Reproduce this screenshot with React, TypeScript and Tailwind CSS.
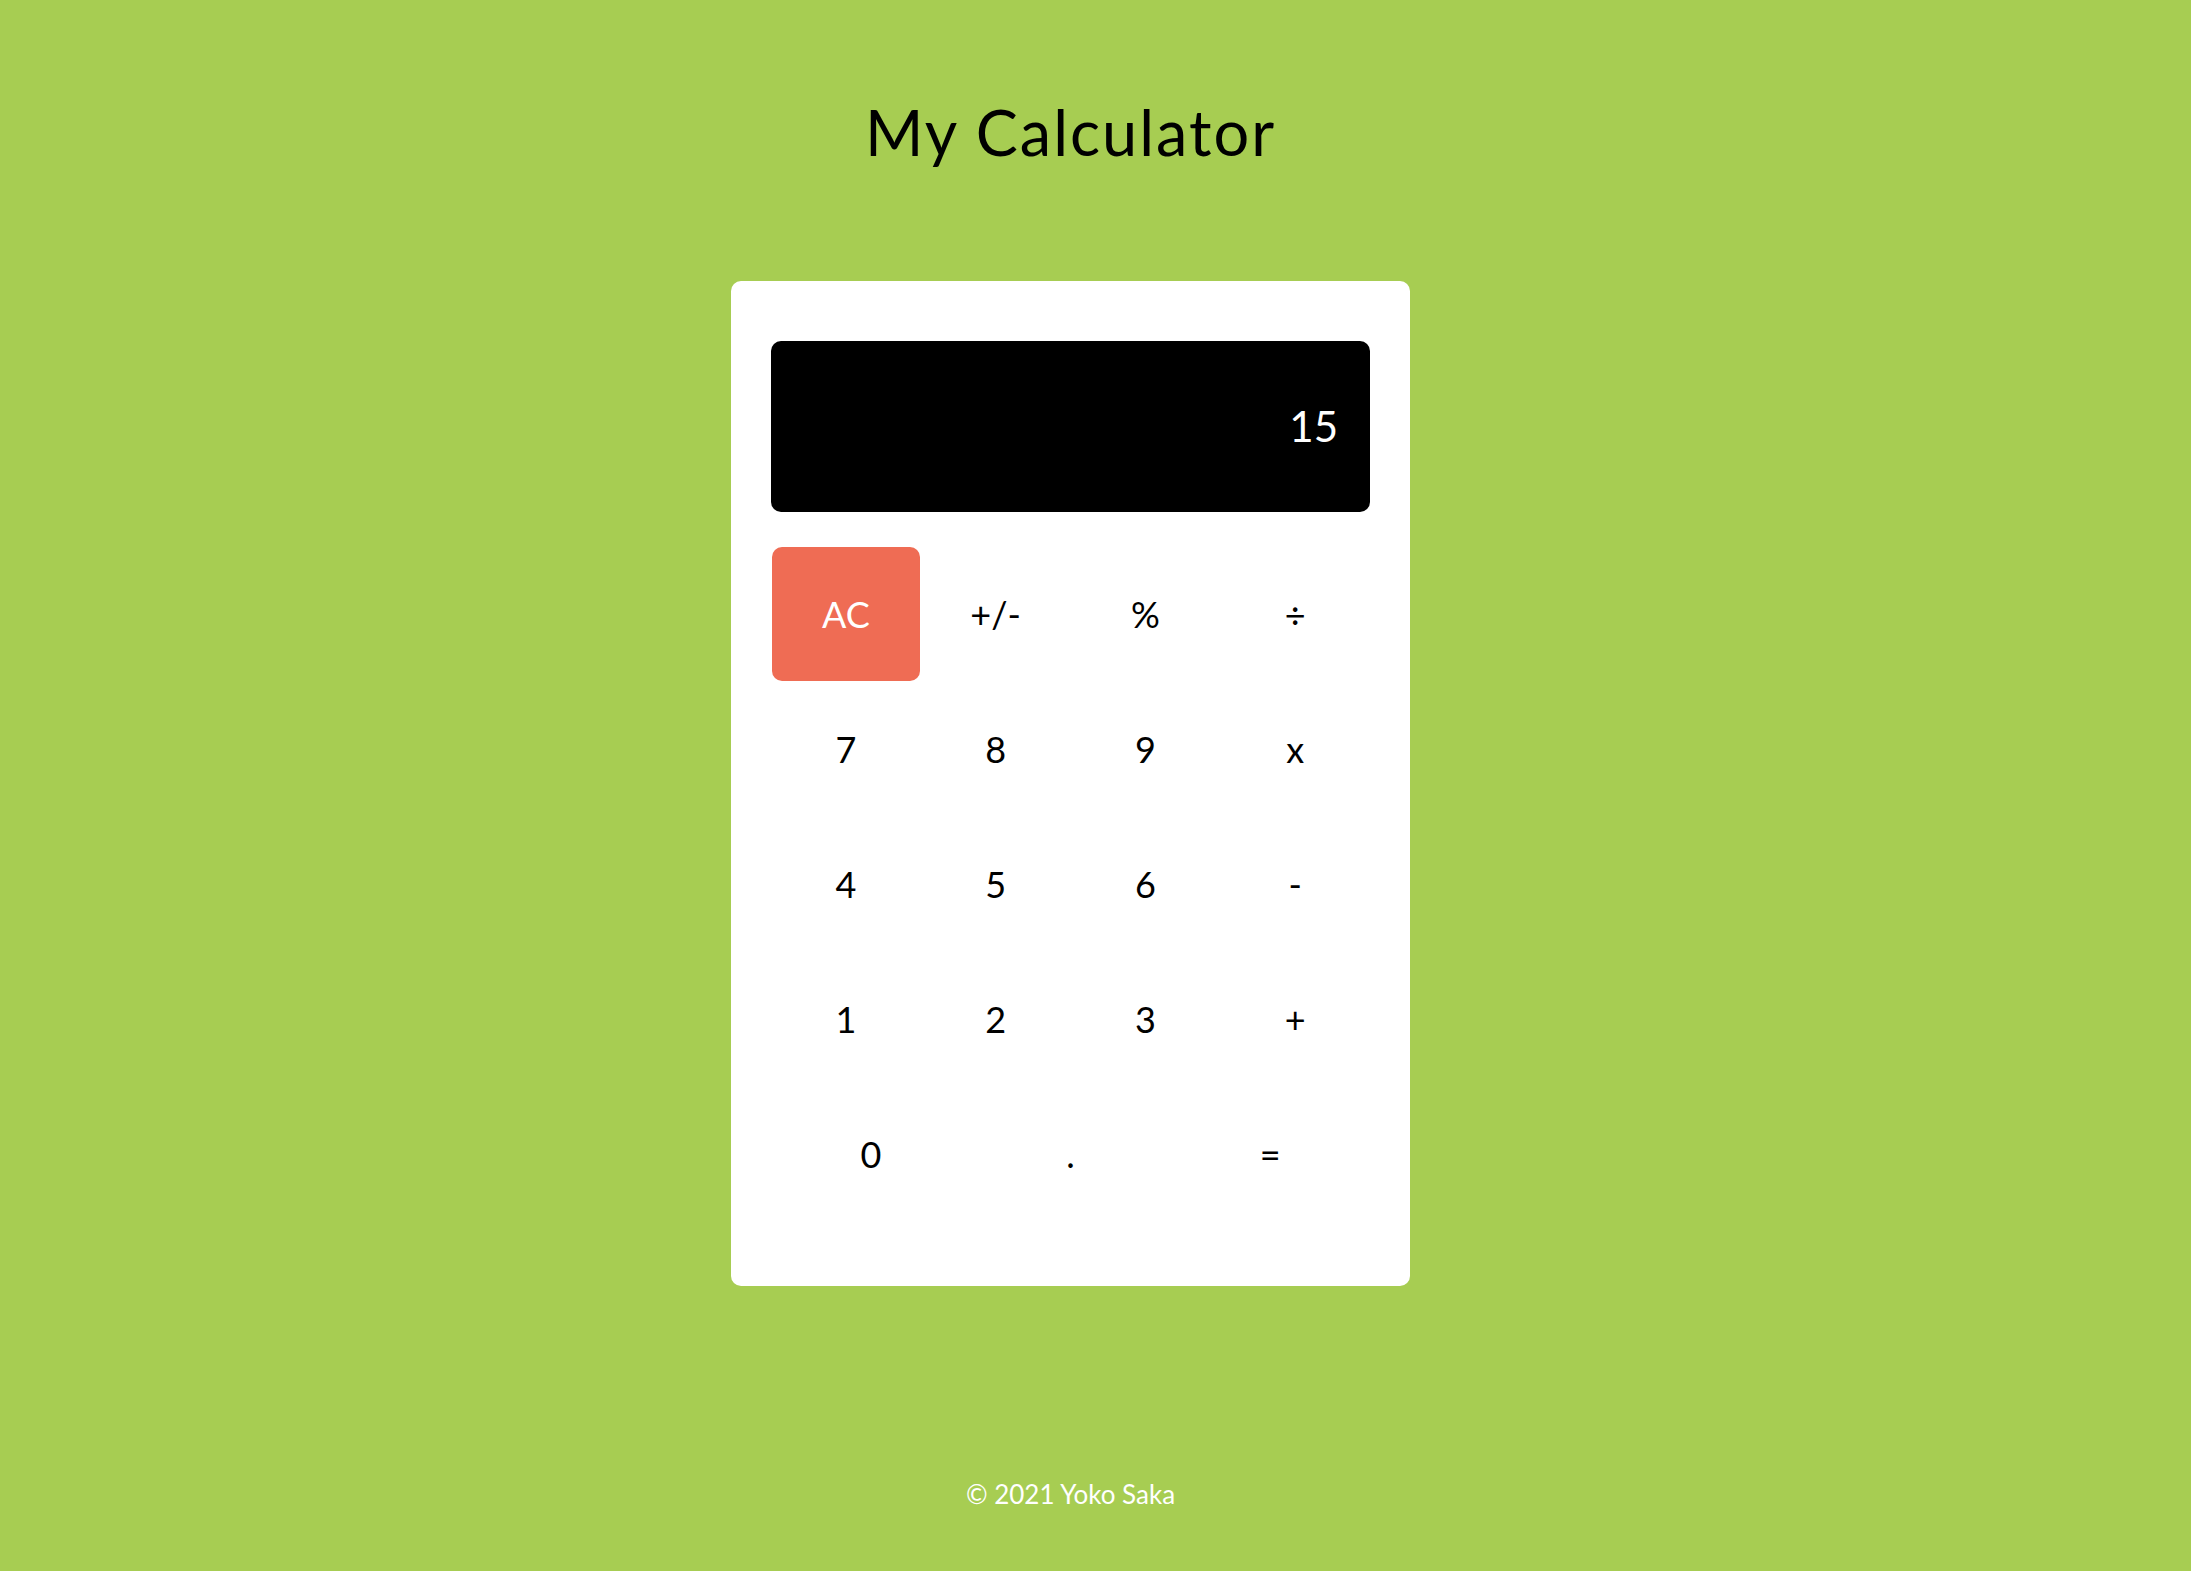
import React from "react";

const rows: string[][] = [
  ["7", "8", "9", "x"],
  ["4", "5", "6", "-"],
  ["1", "2", "3", "+"],
];

export default function App() {
  return (
    <div
      className="flex h-[1571px] w-full flex-col items-center bg-[#a7cd52] pr-[50px] text-black"
      style={{ fontFamily: "Lato, 'Noto Sans', sans-serif" }}
    >
      <h1 className="mt-[98px] text-[63px] leading-[68px] font-normal tracking-[2px]">My Calculator</h1>

      <div className="mt-[115px] w-[679px] rounded-[10px] bg-white px-[40px] pt-[60px] pb-[65px]">
        <div className="flex h-[171px] items-center justify-end rounded-[10px] bg-black pr-[32px] text-[42px] text-white">
          15
        </div>

        <div className="mt-[34px] grid grid-cols-4 text-[36px]">
          <div className="flex h-[135px] items-center justify-center">
            <div className="flex h-[134px] w-[148px] items-center justify-center rounded-[10px] bg-[#ef6c54] text-white">
              AC
            </div>
          </div>
          <div className="flex h-[135px] items-center justify-center">+/-</div>
          <div className="flex h-[135px] items-center justify-center">%</div>
          <div className="flex h-[135px] items-center justify-center">÷</div>
          {rows.flat().map((k, i) => (
            <div key={i} className="flex h-[135px] items-center justify-center">
              {k}
            </div>
          ))}
        </div>
        <div className="grid grid-cols-3 text-[36px]">
          <div className="flex h-[135px] items-center justify-center">0</div>
          <div className="flex h-[135px] items-center justify-center">.</div>
          <div className="flex h-[135px] items-center justify-center">=</div>
        </div>
      </div>

      <div className="mt-auto mb-[57px] text-[26px] text-white">© 2021 Yoko Saka</div>
    </div>
  );
}
